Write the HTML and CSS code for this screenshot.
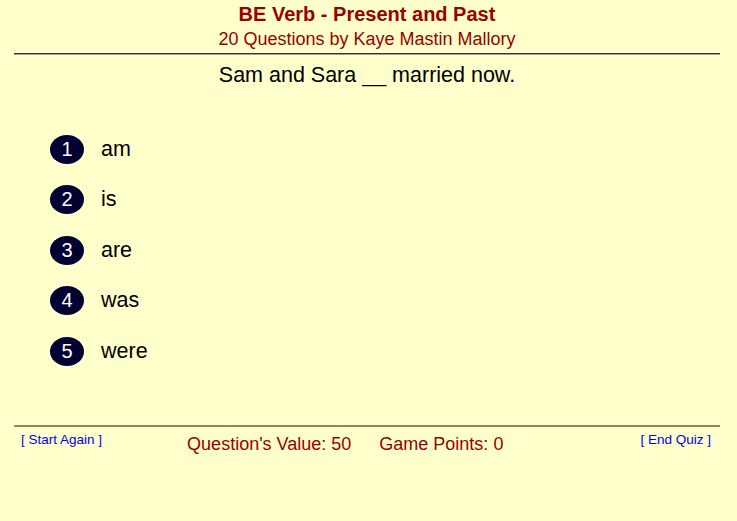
FILE: index.html
```html
<!DOCTYPE html>
<html lang="en">
<head>
    <meta charset="UTF-8">
    <title>BE Verb - Present and Past</title>
    <link rel="stylesheet" href="styles.css">
</head>
<body>

<div class="header">
    <h1>BE Verb - Present and Past</h1>
    <div class="byline">20 Questions by Kaye Mastin Mallory</div>
</div>

<div class="question">Sam and Sara __ married now.</div>

<ul class="answers">
    <li><span class="num">1</span><span class="word">am</span></li>
    <li><span class="num">2</span><span class="word">is</span></li>
    <li><span class="num">3</span><span class="word">are</span></li>
    <li><span class="num">4</span><span class="word">was</span></li>
    <li><span class="num">5</span><span class="word">were</span></li>
</ul>

<div class="footer">
    <a class="link" href="#">[ Start Again ]</a>
    <div class="score">
        <span>Question's Value: 50</span>
        <span>Game Points: 0</span>
    </div>
    <a class="link" href="#">[ End Quiz ]</a>
</div>

</body>
</html>
```

FILE: styles.css
```css
body {
    font-family: "Liberation Sans", Arial, sans-serif;
    background-color: #ffffcc;
    margin: 0;
    padding: 0 17px 0 14px;
    height: 521px;
    box-sizing: border-box;
}
.header {
    text-align: center;
    color: #990000;
    border-bottom: 1px solid #333333;
    box-shadow: 0 1px 0 #a0a090;
    padding-top: 2px;
    padding-bottom: 3px;
}
.header h1 {
    font-size: 20px;
    margin: 0;
    line-height: 24px;
}
.byline {
    font-size: 18px;
    line-height: 22px;
    margin-top: 2px;
}
.question {
    text-align: center;
    font-size: 21.5px;
    margin-top: 8px;
    line-height: 26px;
}
.answers {
    list-style: none;
    margin: 36px 0 0 0;
    padding: 0 0 0 36px;
}
.answers li {
    display: flex;
    align-items: center;
    height: 50.5px;
}
.num {
    width: 34px;
    height: 29px;
    border-radius: 50%;
    background-color: #000033;
    color: #ffffff;
    font-size: 20px;
    display: flex;
    align-items: center;
    justify-content: center;
}
.word {
    font-size: 21.5px;
    margin-left: 17px;
}
.footer {
    margin-top: 48px;
    border-top: 2px solid #888866;
    display: flex;
    justify-content: space-between;
    align-items: flex-start;
    padding: 4px 9px 0 7px;
}
.link {
    color: #0000ee;
    text-decoration: none;
    font-size: 13.5px;
    line-height: 18px;
}
.score {
    color: #990000;
    font-size: 18px;
    line-height: 22px;
    margin-top: 2px;
    margin-right: 52px;
    display: flex;
    gap: 28px;
}
```
